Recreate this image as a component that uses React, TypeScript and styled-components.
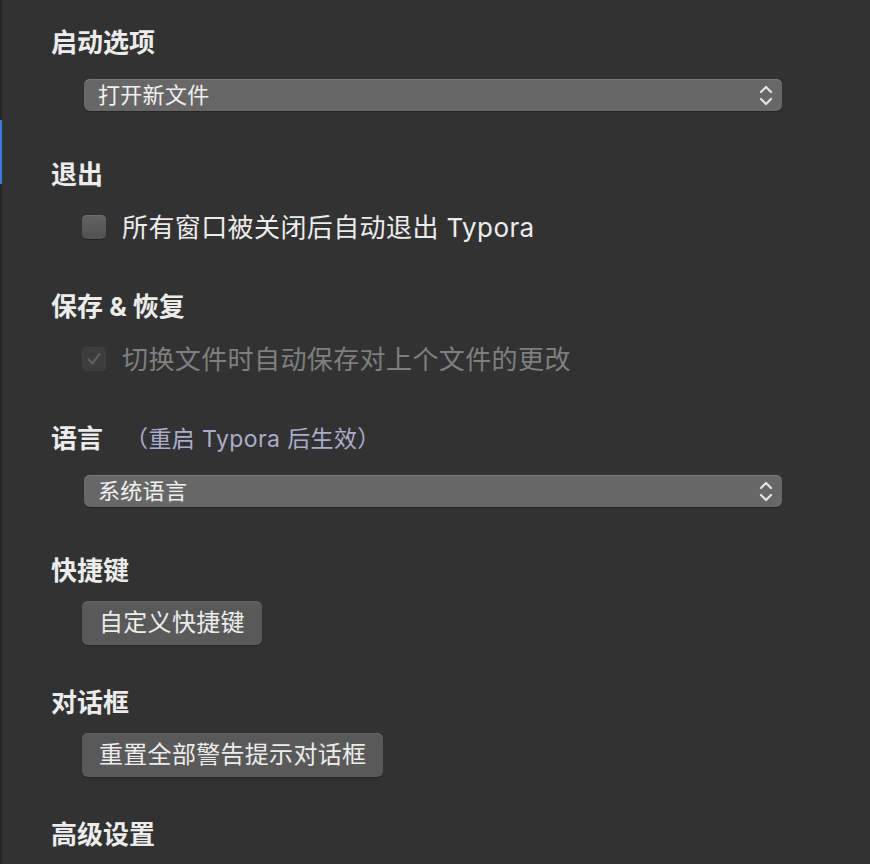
import React from "react";
import styled, { createGlobalStyle } from "styled-components";

const Global = createGlobalStyle`
  html, body { margin: 0; padding: 0; background: #323232; }
  body {
    font-family: "Inter", "Noto Sans CJK SC", sans-serif;
    color: #e6e6e6;
    -webkit-font-smoothing: antialiased;
  }
`;

const Page = styled.div`
  display: flex;
  min-height: 864px;
  background: #323232;
  overflow: hidden;
`;

const EdgeRail = styled.div`
  width: 2px;
  flex: 0 0 2px;
  background: #262626;
  position: relative;
`;

const EdgeMarker = styled.div`
  position: absolute;
  left: 0;
  top: 120px;
  width: 2px;
  height: 64px;
  background: #3a7be2;
`;

const Content = styled.div`
  flex: 1;
  padding: 24px 0 0 49px;
  display: flex;
  flex-direction: column;
`;

const Section = styled.section`
  display: flex;
  flex-direction: column;
  margin-bottom: 26px;
`;

const Heading = styled.h2`
  margin: 0;
  padding-top: 2px;
  font-size: 26px;
  font-weight: 700;
  line-height: 34px;
  color: #ececec;
  display: flex;
  align-items: center;
`;

const Hint = styled.span`
  font-size: 23px;
  font-weight: 400;
  letter-spacing: 0.4px;
  color: #acaccb;
  margin-left: 22px;
`;

const Row = styled.div`
  height: 70px;
  display: flex;
  align-items: center;
  padding-left: 33px;
`;

const SelectBox = styled.div`
  width: 698px;
  height: 32px;
  box-sizing: border-box;
  border-radius: 6px;
  background: #676767;
  box-shadow: inset 0 1px 0 #7a7a7a, 0 1px 1px rgba(0, 0, 0, 0.25);
  display: flex;
  align-items: center;
  justify-content: space-between;
  padding: 0 7px 0 14px;
  font-size: 22px;
  letter-spacing: 0.3px;
  color: #f0f0f0;
  line-height: 32px;
`;

const CheckRow = styled.label<{ $disabled?: boolean }>`
  display: flex;
  align-items: center;
  gap: 16px;
  margin-left: -2px;
  font-size: 26px;
  letter-spacing: 0.4px;
  line-height: 32px;
  color: ${(p) => (p.$disabled ? "#7f7f7f" : "#ececec")};
`;

const LabelText = styled.span`
  padding-top: 2px;
`;

const Box = styled.span<{ $disabled?: boolean }>`
  width: 24px;
  height: 24px;
  box-sizing: border-box;
  border-radius: 5px;
  display: flex;
  align-items: center;
  justify-content: center;
  background: ${(p) =>
    p.$disabled ? "#3c3c3c" : "linear-gradient(#626262, #525252)"};
  box-shadow: ${(p) =>
    p.$disabled
      ? "inset 0 0 0 1px #424242"
      : "inset 0 1px 0 #6e6e6e, 0 1px 1px rgba(0,0,0,0.3)"};
`;

const Button = styled.button`
  height: 44px;
  box-sizing: border-box;
  padding: 0 17px;
  margin-left: -2px;
  border: none;
  border-radius: 6px;
  background: #595959;
  box-shadow: inset 0 1px 0 #646464, 0 1px 1px rgba(0, 0, 0, 0.25);
  color: #ececec;
  font-family: inherit;
  font-size: 24px;
  letter-spacing: 0.3px;
  line-height: 44px;
`;

const Chevrons = () => (
  <svg width="18" height="26" viewBox="0 0 18 26" fill="none">
    <path d="M4 10 L9 5 L14 10" stroke="#e4e4e4" strokeWidth="2.2" strokeLinecap="round" strokeLinejoin="round" />
    <path d="M4 17 L9 22 L14 17" stroke="#e4e4e4" strokeWidth="2.2" strokeLinecap="round" strokeLinejoin="round" />
  </svg>
);

const Check = () => (
  <svg width="18" height="18" viewBox="0 0 18 18" fill="none">
    <path d="M3.5 9.5 L7.5 13.5 L14.5 4" stroke="#5f5f5f" strokeWidth="2.2" strokeLinecap="round" strokeLinejoin="round" />
  </svg>
);

export default function App() {
  return (
    <Page>
      <Global />
      <EdgeRail>
        <EdgeMarker />
      </EdgeRail>
      <Content>
        <Section>
          <Heading>启动选项</Heading>
          <Row>
            <SelectBox>
              <span>打开新文件</span>
              <Chevrons />
            </SelectBox>
          </Row>
        </Section>
        <Section>
          <Heading>退出</Heading>
          <Row>
            <CheckRow>
              <Box />
              <LabelText>所有窗口被关闭后自动退出 Typora</LabelText>
            </CheckRow>
          </Row>
        </Section>
        <Section>
          <Heading>保存 &amp; 恢复</Heading>
          <Row>
            <CheckRow $disabled>
              <Box $disabled>
                <Check />
              </Box>
              <LabelText>切换文件时自动保存对上个文件的更改</LabelText>
            </CheckRow>
          </Row>
        </Section>
        <Section>
          <Heading>
            语言<Hint>（重启 Typora 后生效）</Hint>
          </Heading>
          <Row>
            <SelectBox>
              <span>系统语言</span>
              <Chevrons />
            </SelectBox>
          </Row>
        </Section>
        <Section>
          <Heading>快捷键</Heading>
          <Row>
            <Button>自定义快捷键</Button>
          </Row>
        </Section>
        <Section>
          <Heading>对话框</Heading>
          <Row>
            <Button>重置全部警告提示对话框</Button>
          </Row>
        </Section>
        <Section>
          <Heading>高级设置</Heading>
        </Section>
      </Content>
    </Page>
  );
}
